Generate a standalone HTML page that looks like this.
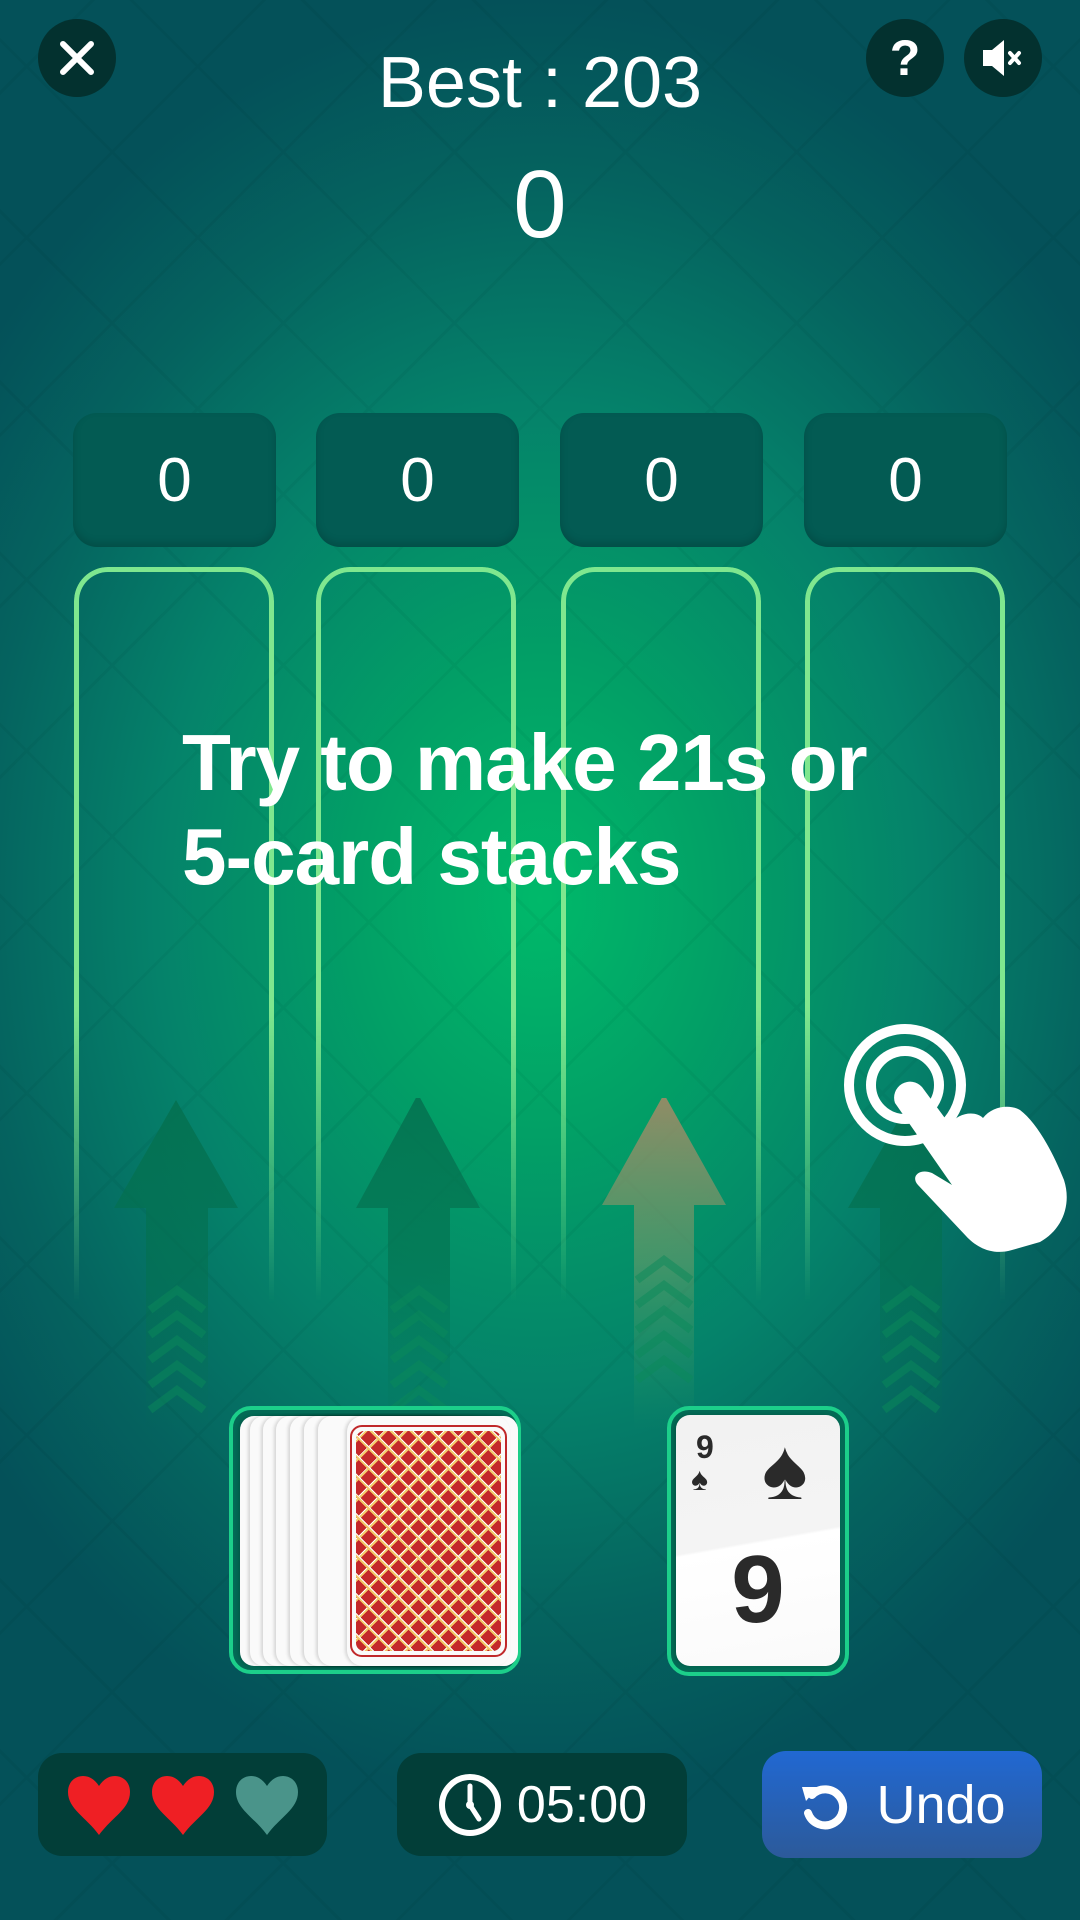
<!DOCTYPE html>
<html><head><meta charset="utf-8"><style>
*{margin:0;padding:0;box-sizing:border-box}
html,body{width:1080px;height:1920px;overflow:hidden}
body{position:relative;font-family:"Liberation Sans",sans-serif;color:#fff;
background:radial-gradient(ellipse 700px 900px at 540px 900px,#00b96a 0%,#02a166 25%,#05826a 55%,#05635f 80%,#045159 100%);}
.pat{position:absolute;inset:0;opacity:.03;background:
repeating-linear-gradient(45deg,transparent 0 118px,#000 118px 121px),
repeating-linear-gradient(-45deg,transparent 0 118px,#000 118px 121px);}
.btn{position:absolute;width:78px;height:78px;border-radius:50%;background:#03312f;display:flex;align-items:center;justify-content:center}
.best{position:absolute;left:0;width:1080px;top:42px;text-align:center;font-size:72px}
.score{position:absolute;left:0;width:1080px;top:150px;text-align:center;font-size:96px}
.sbox{position:absolute;top:413px;width:203px;height:134px;border-radius:24px;background:#035b53;box-shadow:inset 0 -4px 8px rgba(0,0,0,.15);font-size:62px;display:flex;align-items:center;justify-content:center}
.col{position:absolute;top:567px;width:200px;height:800px;border:5px solid #7fe78f;border-bottom:none;border-radius:34px 34px 0 0;
-webkit-mask-image:linear-gradient(#000 0%,#000 55%,transparent 92%);mask-image:linear-gradient(#000 0%,#000 55%,transparent 92%)}
.msg{position:absolute;left:182px;top:716px;font-weight:bold;font-size:80px;line-height:94px;letter-spacing:-1px}
.arr{position:absolute;top:1098px}
.slot{position:absolute;border-radius:22px;border:4px solid #1ccf8a;background:#036a55}
.card{position:absolute;background:#fafafa;border-radius:14px;box-shadow:-2px 0 3px rgba(0,0,0,.15)}
.pill{position:absolute;top:1753px;height:103px;border-radius:24px;background:#023e38}
</style></head><body>
<div class="pat"></div>

<div class="btn" style="left:38px;top:19px"><svg width="40" height="40" viewBox="0 0 40 40"><path d="M6 6L34 34M34 6L6 34" stroke="#fff" stroke-width="6" stroke-linecap="round"/></svg></div>
<div class="btn" style="left:866px;top:19px;font-size:50px;font-weight:bold">?</div>
<div class="btn" style="left:964px;top:19px"><svg width="50" height="50" viewBox="0 0 50 50"><path d="M5 17h9l12-10v36l-12-10H5z" fill="#fff"/><path d="M32 20l9 10M41 20l-9 10" stroke="#fff" stroke-width="4" stroke-linecap="round"/></svg></div>

<div class="best">Best : 203</div>
<div class="score">0</div>

<div class="sbox" style="left:73px">0</div>
<div class="sbox" style="left:316px">0</div>
<div class="sbox" style="left:560px">0</div>
<div class="sbox" style="left:804px">0</div>

<div class="col" style="left:74px"></div>
<div class="col" style="left:316px"></div>
<div class="col" style="left:561px"></div>
<div class="col" style="left:805px"></div>

<svg class="arr" style="left:0" width="1080" height="340" viewBox="0 1098 1080 340">
<defs><linearGradient id="fa" x1="0" y1="1098" x2="0" y2="1430" gradientUnits="userSpaceOnUse"><stop offset="0" stop-color="#04704f" stop-opacity=".85"/><stop offset=".5" stop-color="#04704f" stop-opacity=".6"/><stop offset="1" stop-color="#04704f" stop-opacity="0"/></linearGradient>
<linearGradient id="fb" x1="0" y1="1098" x2="0" y2="1430" gradientUnits="userSpaceOnUse"><stop offset="0" stop-color="#a08a66" stop-opacity=".9"/><stop offset=".5" stop-color="#6a9a6a" stop-opacity=".6"/><stop offset="1" stop-color="#2a9a60" stop-opacity="0"/></linearGradient></defs>
<g fill="url(#fa)"><path d="M176 1100L238 1208H208V1430H146V1208H114Z"/><path d="M418 1094L480 1208H450V1430H388V1208H356Z"/><path d="M910 1100L972 1208H942V1430H880V1208H848Z"/></g>
<path fill="url(#fb)" d="M664 1094L726 1205H694V1430H634V1205H602Z"/>
<g fill="none" stroke="#0a8a5a" stroke-opacity=".5" stroke-width="8">
<path d="M150 1310l27-20 27 20M150 1335l27-20 27 20M150 1360l27-20 27 20M150 1385l27-20 27 20M150 1410l27-20 27 20"/>
<path d="M392 1310l27-20 27 20M392 1335l27-20 27 20M392 1360l27-20 27 20M392 1385l27-20 27 20M392 1410l27-20 27 20"/>
<path d="M637 1280l27-20 27 20M637 1305l27-20 27 20M637 1330l27-20 27 20M637 1355l27-20 27 20M637 1380l27-20 27 20"/>
<path d="M884 1310l27-20 27 20M884 1335l27-20 27 20M884 1360l27-20 27 20M884 1385l27-20 27 20M884 1410l27-20 27 20"/>
</g>
</svg>

<div class="msg">Try to make 21s or<br>5-card stacks</div>

<svg style="position:absolute;left:820px;top:1000px" width="260" height="280" viewBox="820 1000 260 280">
<circle cx="905" cy="1085" r="56" fill="none" stroke="#fff" stroke-width="10"/>
<circle cx="905" cy="1085" r="34" fill="none" stroke="#fff" stroke-width="10"/>
<path fill="#fff" d="M895 1103a16 16 0 0 1 27-16L950 1125C957 1113 975 1110 983 1118C992 1106 1010 1104 1020 1110C1036 1122 1052 1150 1064 1180C1072 1205 1062 1230 1040 1242L1012 1250C992 1256 976 1247 966 1236L918 1185C910 1176 920 1168 932 1173L952 1185Z"/>
</svg>

<div class="slot" style="left:229px;top:1406px;width:292px;height:268px"></div>
<div class="card" style="left:240px;top:1416px;width:210px;height:250px"></div>
<div class="card" style="left:250px;top:1416px;width:210px;height:250px"></div>
<div class="card" style="left:263px;top:1416px;width:210px;height:250px"></div>
<div class="card" style="left:276px;top:1416px;width:210px;height:250px"></div>
<div class="card" style="left:290px;top:1416px;width:210px;height:250px"></div>
<div class="card" style="left:304px;top:1416px;width:210px;height:250px"></div>
<div class="card" style="left:318px;top:1416px;width:200px;height:250px"></div>
<div class="card" style="left:347px;top:1416px;width:163px;height:250px;border-radius:16px">
<div style="position:absolute;left:3px;top:9px;right:3px;bottom:9px;border:2px solid #c0282a;border-radius:12px;padding:4px">
<div style="width:100%;height:100%;border-radius:8px;background-color:#c4282a;background-image:repeating-linear-gradient(45deg,transparent 0 10px,#f4c86a 10px 12px,#fff 12px 13px,transparent 13px 14.1px),repeating-linear-gradient(-45deg,transparent 0 10px,#f4c86a 10px 12px,#fff 12px 13px,transparent 13px 14.1px)"></div></div></div>

<div class="slot" style="left:667px;top:1406px;width:182px;height:270px"></div>
<div class="card" style="left:676px;top:1415px;width:164px;height:251px;background:linear-gradient(170deg,#f2f2f2 0%,#f4f4f4 50%,#fff 51%,#fafafa 100%)">
<div style="position:absolute;left:20px;top:14px;font-size:32px;font-weight:bold;color:#2a2a2a">9</div>
<div style="position:absolute;left:15px;top:46px;font-size:32px;color:#2a2a2a">♠</div>
<div style="position:absolute;left:86px;top:12px;font-size:86px;color:#2a2a2a;line-height:1">♠</div>
<div style="position:absolute;left:0;width:164px;top:120px;text-align:center;font-size:96px;font-weight:bold;color:#2a2a2a">9</div>
</div>

<div class="pill" style="left:38px;width:289px;display:flex;align-items:center;justify-content:center;gap:18px">
<svg width="66" height="60" viewBox="0 0 66 60"><path d="M33 60C20 42 2 34 2 17 2 7 9 1 17 1c7 0 12 4 16 10 4-6 9-10 16-10 8 0 15 6 15 16 0 17-18 25-31 43z" fill="#ef1f24"/></svg>
<svg width="66" height="60" viewBox="0 0 66 60"><path d="M33 60C20 42 2 34 2 17 2 7 9 1 17 1c7 0 12 4 16 10 4-6 9-10 16-10 8 0 15 6 15 16 0 17-18 25-31 43z" fill="#ef1f24"/></svg>
<svg width="66" height="60" viewBox="0 0 66 60"><path d="M33 60C20 42 2 34 2 17 2 7 9 1 17 1c7 0 12 4 16 10 4-6 9-10 16-10 8 0 15 6 15 16 0 17-18 25-31 43z" fill="#4a948a"/></svg>
</div>

<div class="pill" style="left:397px;width:290px;display:flex;align-items:center;justify-content:center;gap:14px">
<svg width="66" height="66" viewBox="0 0 66 66"><circle cx="33" cy="33" r="28" fill="none" stroke="#fff" stroke-width="6"/><path d="M33 14v19l9 14" stroke="#fff" stroke-width="5" fill="none" stroke-linecap="round"/><circle cx="33" cy="33" r="4" fill="#fff"/></svg>
<span style="font-size:52px">05:00</span></div>

<div style="position:absolute;left:762px;top:1751px;width:280px;height:107px;border-radius:24px;background:linear-gradient(#2168d2,#2c5a9a);display:flex;align-items:center;justify-content:center;gap:26px">
<svg width="52" height="52" viewBox="0 0 52 52"><path d="M14 16A18 18 0 1 1 10 34" fill="none" stroke="#fff" stroke-width="8" stroke-linecap="round"/><path d="M4 8L20 8 8 22Z" fill="#fff"/></svg>
<span style="font-size:54px">Undo</span></div>
</body></html>
